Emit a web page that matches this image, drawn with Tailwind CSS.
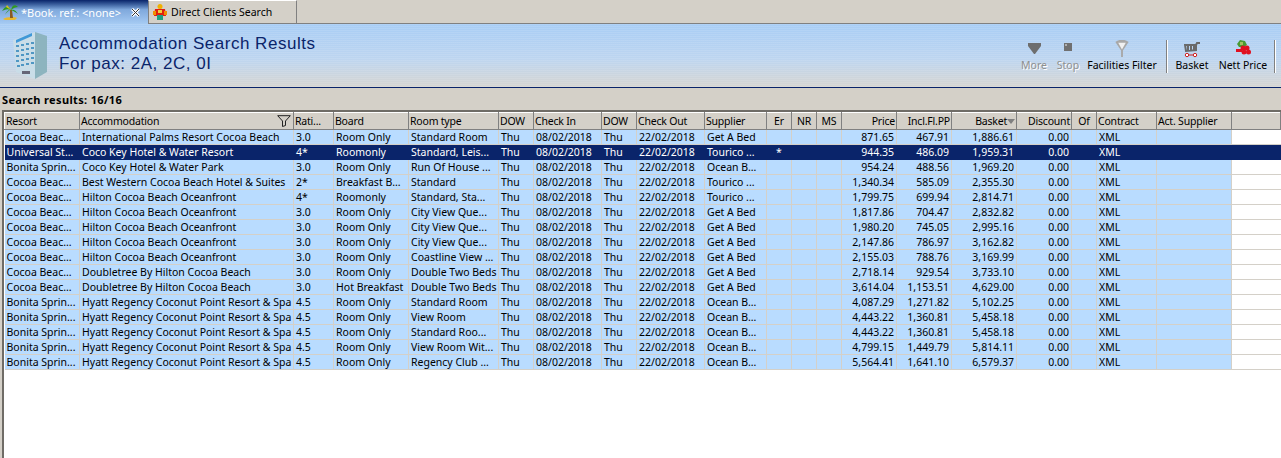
<!DOCTYPE html>
<html><head><meta charset="utf-8"><title>Accommodation Search Results</title>
<script src="https://cdn.jsdelivr.net/npm/@tailwindcss/browser@4"></script></head>
<body class="m-0 h-[458px] w-[1281px] overflow-hidden bg-[#d4d0c8] font-['Noto_Sans',Arial,sans-serif] text-[10.5px] leading-[15px] text-black">
<div class="flex h-[458px] flex-col">
  <div class="flex h-[24px] items-stretch border-b border-[#808080]">
    <div class="-mb-px flex w-[148px] items-center bg-gradient-to-b from-[#0a246a] via-[#7fa8dc] via-40% to-[#a6cbf3] pl-[2px] text-[11px] text-white">
      <svg class="h-[17px] w-[16px] shrink-0" viewBox="0 0 16 17"><path fill="#e8b830" d="M1 15c2-2 11-3 14-1l-2 2H3z"/><path fill="#8a5a20" d="M8 6h2l1 8H8z"/><path fill="#2f9a20" d="M9 6C7 1 3 2 0 7c2-1 5-3 9-1zM9 6c1-5 4-6 7-3-2 0-5 1-7 3zM9 6c2-1 5 0 7 4-2-2-5-3-7-4zM8 6C6 6 4 8 3 11c1-2 3-4 5-5z"/><path fill="#d8c020" d="M5 1l4 5-5-3z"/></svg>
      <span class="ml-[3px] whitespace-nowrap">*Book. ref.: &lt;none&gt;</span>
      <svg class="ml-auto mr-[8px] h-[9px] w-[9px]" viewBox="0 0 9 9"><path stroke="#fff" stroke-width="3" d="M1 1l7 7M8 1l-7 7"/><path stroke="#333" stroke-width="1" d="M1 1l7 7M8 1l-7 7"/></svg>
    </div>
    <div class="flex w-[149px] items-center border-x border-t border-x-[#808080] border-t-white bg-[#d4d0c8] pl-[4px]">
      <svg class="h-[16px] w-[14px] shrink-0" viewBox="0 0 14 16"><circle cx="7" cy="2.5" r="2.5" fill="#f0b000"/><path fill="#e02010" d="M2 5h10l1 7H1z"/><path fill="#f09000" d="M0 7h3v4H0zM11 7h3v4h-3z"/><path fill="#20a080" d="M4 11h6v5H4z"/><path fill="#f0d040" d="M5 6h4v3H5z"/></svg>
      <span class="ml-[4px] whitespace-nowrap">Direct Clients Search</span>
    </div>
  </div>

  <div class="flex h-[64px] items-stretch border-b border-[#0a246a] bg-[repeating-linear-gradient(0deg,rgba(255,255,255,0.1)_0_1px,transparent_1px_2px),linear-gradient(#a8cdf5,#bdd5f0_55%,#d6d5d2)]">
    <div class="flex w-[59px] shrink-0 items-start pl-[13px] pt-[7px]">
      <svg class="h-[49px] w-[34px]" viewBox="0 0 34 49"><path fill="#c9dde8" d="M0 9L22 1v47L3 41z"/><path fill="#8db4bf" d="M22 1l12 4v36l-12 7z"/><path fill="#3f98d8" d="M3 9L19 2v3L3 12z"/><g fill="#4f97c4"><path d="M3 14h3v2H3zM8 13h3v2H8zM13 12h3v2h-3zM18 11h3v2h-3zM3 19h3v2H3zM8 18h3v2H8zM13 17h3v2h-3zM18 16h3v2h-3zM3 24h3v2H3zM8 23h3v2H8zM13 22h3v2h-3zM18 21h3v2h-3zM3 29h3v2H3zM8 28h3v2H8zM13 27h3v2h-3zM18 26h3v2h-3zM4 34h3v2H4zM8 33h3v2H8zM13 32h3v2h-3zM18 31h3v2h-3z"/></g><path fill="#667" d="M9 40h8v3H9z"/></svg>
    </div>
    <div class="flex-1 pt-[10px] font-['Liberation_Sans',Arial,sans-serif] text-[17px] leading-[20px] tracking-[0.52px] text-[#0a246a]">
      <div>Accommodation Search Results</div>
      <div>For pax: 2A, 2C, 0I</div>
    </div>
    <div class="flex items-stretch pt-[16px] pb-[14px]">
      <div class="flex w-[40px] flex-col items-center justify-between text-[#8f8f8f] [text-shadow:1px_1px_0_#fff]">
        <svg class="mt-[3px] h-[11px] w-[13px]" viewBox="0 0 13 11"><path fill="#6e6e6e" d="M0 0h13v3L7 11H6L0 3z"/></svg><span>More</span>
      </div>
      <div class="flex w-[28px] flex-col items-center justify-between text-[#8f8f8f] [text-shadow:1px_1px_0_#fff]">
        <svg class="mt-[3px] h-[8px] w-[8px]" viewBox="0 0 8 8"><path fill="#707070" d="M0 0h8v8H0z"/><path fill="#b0b0b0" d="M1 1h2v2H1z"/></svg><span>Stop</span>
      </div>
      <div class="ml-[6px] flex w-[68px] flex-col items-center justify-between whitespace-nowrap">
        <svg class="h-[19px] w-[14px]" viewBox="0 0 14 19"><path fill="#a8a8a8" d="M0 2c4-3 10-3 14 0L8 11v7H6V11z"/><path fill="#f0f0f0" d="M3 3h8L7 10z"/></svg><span>Facilities Filter</span>
      </div>
      <div class="ml-[10px] w-[2px] border-x border-l-[#808080] border-r-white"></div>
      <div class="ml-[4px] flex w-[40px] flex-col items-center justify-between">
        <svg class="mt-[1px] h-[17px] w-[16px]" viewBox="0 0 16 17" fill="none"><path stroke="#6a6a6a" stroke-width="2" d="M1 4h11v5l-10 1zM4 4v6M7 4v6M10 4v5M12 4l1-2h3"/><path stroke="#d02020" d="M3 14h8"/><circle cx="3" cy="14" r="1.7" fill="#fff" stroke="#d02020"/><circle cx="11" cy="14" r="1.7" fill="#fff" stroke="#d02020"/></svg><span>Basket</span>
      </div>
      <div class="ml-[7px] flex w-[48px] flex-col items-center justify-between whitespace-nowrap">
        <svg class="h-[16px] w-[16px]" viewBox="0 0 16 16"><path fill="#4a9a30" d="M2 4l3-4 5 1 2 4-3 2H4z"/><path fill="#a0c060" d="M5 2h3v3H5z"/><g fill="#e01020"><circle cx="8" cy="8" r="2.5"/><circle cx="12" cy="8" r="2.5"/><circle cx="13.5" cy="12" r="2.5"/><circle cx="9" cy="12" r="2.5"/><path d="M1 9h6v3H1z"/></g></svg><span>Nett Price</span>
      </div>
      <div class="ml-[7px] w-[2px] border-x border-l-[#808080] border-r-white"></div>
      <div class="w-[5px]"></div>
    </div>
  </div>

  <div class="h-[22px] pt-[4px] pl-[2px] text-[11px] leading-[15px] font-bold tracking-[0.35px]">Search results: 16/16</div>

  <div class="ml-[2px] min-h-0 flex-1 overflow-hidden border-t-2 border-l-2 border-t-[#6f6c66] border-l-[#6f6c66] bg-white">
    <table class="w-[1277px] table-fixed border-collapse [&_td]:h-[15px] [&_td]:overflow-hidden [&_td]:whitespace-nowrap [&_td]:border-r [&_td]:border-b [&_td]:border-[#d4d0c8] [&_td]:p-0 [&_td]:pl-[2px] [&_td]:pr-[2px] [&_td]:leading-[14px] [&_th]:h-[17px] [&_th]:overflow-hidden [&_th]:whitespace-nowrap [&_th]:border-t [&_th]:border-l [&_th]:border-r [&_th]:border-b [&_th]:border-t-white [&_th]:border-l-white [&_th]:border-r-[#808080] [&_th]:border-b-[#808080] [&_th]:bg-[#d4d0c8] [&_th]:px-[1px] [&_th]:pb-0 [&_th]:text-left [&_th]:font-normal [&_th]:leading-[13px] [&_th]:tracking-[-0.2px] [&_tbody_tr]:bg-[#b9dcff] [&_td:nth-child(14)]:text-right [&_td:nth-child(15)]:text-right [&_td:nth-child(16)]:text-right [&_td:nth-child(17)]:text-right [&_td:nth-child(21)]:bg-white [&_td:nth-child(21)]:border-r-0">
      <colgroup>
        <col class="w-[75px]"><col class="w-[214px]"><col class="w-[40px]"><col class="w-[75px]"><col class="w-[90px]"><col class="w-[35px]"><col class="w-[68px]"><col class="w-[35px]"><col class="w-[68px]"><col class="w-[62px]"><col class="w-[25px]"><col class="w-[25px]"><col class="w-[25px]"><col class="w-[55px]"><col class="w-[55px]"><col class="w-[65px]"><col class="w-[55px]"><col class="w-[25px]"><col class="w-[60px]"><col class="w-[75px]"><col>
      </colgroup>
      <thead><tr>
        <th>Resort</th>
        <th><div class="flex items-center justify-between pr-[1px]"><span>Accommodation</span><svg class="h-[12px] w-[14px]" viewBox="0 0 14 12" fill="none"><path stroke="#222" d="M.7.7h12.6L8.5 6v4.5l-3 1V6z"/></svg></div></th>
        <th>Rati...</th><th>Board</th><th>Room type</th><th>DOW</th><th>Check In</th><th>DOW</th><th>Check Out</th><th>Supplier</th>
        <th class="text-center!">Er</th><th class="text-center!">NR</th><th class="text-center!">MS</th>
        <th class="text-right!">Price</th><th class="text-right!">Incl.Fl.PP</th>
        <th><div class="flex items-center justify-end"><span>Basket</span><svg class="h-[5px] w-[8px]" viewBox="0 0 8 5"><path fill="#808080" d="M0 0h8L4 5z"/></svg></div></th>
        <th class="text-right!">Discount</th><th class="text-center!">Of</th><th>Contract</th><th>Act. Supplier</th><th></th>
      </tr></thead>
      <tbody>
        <tr><td>Cocoa Beac...</td><td>International Palms Resort Cocoa Beach</td><td>3.0</td><td>Room Only</td><td>Standard Room</td><td>Thu</td><td>08/02/2018</td><td>Thu</td><td>22/02/2018</td><td>Get A Bed</td><td></td><td></td><td></td><td>871.65</td><td>467.91</td><td>1,886.61</td><td>0.00</td><td></td><td>XML</td><td></td><td></td></tr>
        <tr class="bg-[#0a246a]! text-white [&_td]:border-[#0a246a]!"><td>Universal St...</td><td>Coco Key Hotel &amp; Water Resort</td><td>4*</td><td>Roomonly</td><td>Standard, Leis...</td><td>Thu</td><td>08/02/2018</td><td>Thu</td><td>22/02/2018</td><td>Tourico ...</td><td class="text-center">*</td><td></td><td></td><td>944.35</td><td>486.09</td><td>1,959.31</td><td>0.00</td><td></td><td>XML</td><td></td><td class="bg-[#0a246a]!"></td></tr>
        <tr><td>Bonita Sprin...</td><td>Coco Key Hotel &amp; Water Park</td><td>3.0</td><td>Room Only</td><td>Run Of House ...</td><td>Thu</td><td>08/02/2018</td><td>Thu</td><td>22/02/2018</td><td>Ocean B...</td><td></td><td></td><td></td><td>954.24</td><td>488.56</td><td>1,969.20</td><td>0.00</td><td></td><td>XML</td><td></td><td></td></tr>
        <tr><td>Cocoa Beac...</td><td>Best Western Cocoa Beach Hotel &amp; Suites</td><td>2*</td><td>Breakfast B...</td><td>Standard</td><td>Thu</td><td>08/02/2018</td><td>Thu</td><td>22/02/2018</td><td>Tourico ...</td><td></td><td></td><td></td><td>1,340.34</td><td>585.09</td><td>2,355.30</td><td>0.00</td><td></td><td>XML</td><td></td><td></td></tr>
        <tr><td>Cocoa Beac...</td><td>Hilton Cocoa Beach Oceanfront</td><td>4*</td><td>Roomonly</td><td>Standard, Sta...</td><td>Thu</td><td>08/02/2018</td><td>Thu</td><td>22/02/2018</td><td>Tourico ...</td><td></td><td></td><td></td><td>1,799.75</td><td>699.94</td><td>2,814.71</td><td>0.00</td><td></td><td>XML</td><td></td><td></td></tr>
        <tr><td>Cocoa Beac...</td><td>Hilton Cocoa Beach Oceanfront</td><td>3.0</td><td>Room Only</td><td>City View Que...</td><td>Thu</td><td>08/02/2018</td><td>Thu</td><td>22/02/2018</td><td>Get A Bed</td><td></td><td></td><td></td><td>1,817.86</td><td>704.47</td><td>2,832.82</td><td>0.00</td><td></td><td>XML</td><td></td><td></td></tr>
        <tr><td>Cocoa Beac...</td><td>Hilton Cocoa Beach Oceanfront</td><td>3.0</td><td>Room Only</td><td>City View Que...</td><td>Thu</td><td>08/02/2018</td><td>Thu</td><td>22/02/2018</td><td>Get A Bed</td><td></td><td></td><td></td><td>1,980.20</td><td>745.05</td><td>2,995.16</td><td>0.00</td><td></td><td>XML</td><td></td><td></td></tr>
        <tr><td>Cocoa Beac...</td><td>Hilton Cocoa Beach Oceanfront</td><td>3.0</td><td>Room Only</td><td>City View Que...</td><td>Thu</td><td>08/02/2018</td><td>Thu</td><td>22/02/2018</td><td>Get A Bed</td><td></td><td></td><td></td><td>2,147.86</td><td>786.97</td><td>3,162.82</td><td>0.00</td><td></td><td>XML</td><td></td><td></td></tr>
        <tr><td>Cocoa Beac...</td><td>Hilton Cocoa Beach Oceanfront</td><td>3.0</td><td>Room Only</td><td>Coastline View ...</td><td>Thu</td><td>08/02/2018</td><td>Thu</td><td>22/02/2018</td><td>Get A Bed</td><td></td><td></td><td></td><td>2,155.03</td><td>788.76</td><td>3,169.99</td><td>0.00</td><td></td><td>XML</td><td></td><td></td></tr>
        <tr><td>Cocoa Beac...</td><td>Doubletree By Hilton Cocoa Beach</td><td>3.0</td><td>Room Only</td><td>Double Two Beds</td><td>Thu</td><td>08/02/2018</td><td>Thu</td><td>22/02/2018</td><td>Get A Bed</td><td></td><td></td><td></td><td>2,718.14</td><td>929.54</td><td>3,733.10</td><td>0.00</td><td></td><td>XML</td><td></td><td></td></tr>
        <tr><td>Cocoa Beac...</td><td>Doubletree By Hilton Cocoa Beach</td><td>3.0</td><td>Hot Breakfast</td><td>Double Two Beds</td><td>Thu</td><td>08/02/2018</td><td>Thu</td><td>22/02/2018</td><td>Get A Bed</td><td></td><td></td><td></td><td>3,614.04</td><td>1,153.51</td><td>4,629.00</td><td>0.00</td><td></td><td>XML</td><td></td><td></td></tr>
        <tr><td>Bonita Sprin...</td><td>Hyatt Regency Coconut Point Resort &amp; Spa</td><td>4.5</td><td>Room Only</td><td>Standard Room</td><td>Thu</td><td>08/02/2018</td><td>Thu</td><td>22/02/2018</td><td>Ocean B...</td><td></td><td></td><td></td><td>4,087.29</td><td>1,271.82</td><td>5,102.25</td><td>0.00</td><td></td><td>XML</td><td></td><td></td></tr>
        <tr><td>Bonita Sprin...</td><td>Hyatt Regency Coconut Point Resort &amp; Spa</td><td>4.5</td><td>Room Only</td><td>View Room</td><td>Thu</td><td>08/02/2018</td><td>Thu</td><td>22/02/2018</td><td>Ocean B...</td><td></td><td></td><td></td><td>4,443.22</td><td>1,360.81</td><td>5,458.18</td><td>0.00</td><td></td><td>XML</td><td></td><td></td></tr>
        <tr><td>Bonita Sprin...</td><td>Hyatt Regency Coconut Point Resort &amp; Spa</td><td>4.5</td><td>Room Only</td><td>Standard Roo...</td><td>Thu</td><td>08/02/2018</td><td>Thu</td><td>22/02/2018</td><td>Ocean B...</td><td></td><td></td><td></td><td>4,443.22</td><td>1,360.81</td><td>5,458.18</td><td>0.00</td><td></td><td>XML</td><td></td><td></td></tr>
        <tr><td>Bonita Sprin...</td><td>Hyatt Regency Coconut Point Resort &amp; Spa</td><td>4.5</td><td>Room Only</td><td>View Room Wit...</td><td>Thu</td><td>08/02/2018</td><td>Thu</td><td>22/02/2018</td><td>Ocean B...</td><td></td><td></td><td></td><td>4,799.15</td><td>1,449.79</td><td>5,814.11</td><td>0.00</td><td></td><td>XML</td><td></td><td></td></tr>
        <tr><td>Bonita Sprin...</td><td>Hyatt Regency Coconut Point Resort &amp; Spa</td><td>4.5</td><td>Room Only</td><td>Regency Club ...</td><td>Thu</td><td>08/02/2018</td><td>Thu</td><td>22/02/2018</td><td>Ocean B...</td><td></td><td></td><td></td><td>5,564.41</td><td>1,641.10</td><td>6,579.37</td><td>0.00</td><td></td><td>XML</td><td></td><td></td></tr>
      </tbody>
    </table>
  </div>
</div>
</body></html>
